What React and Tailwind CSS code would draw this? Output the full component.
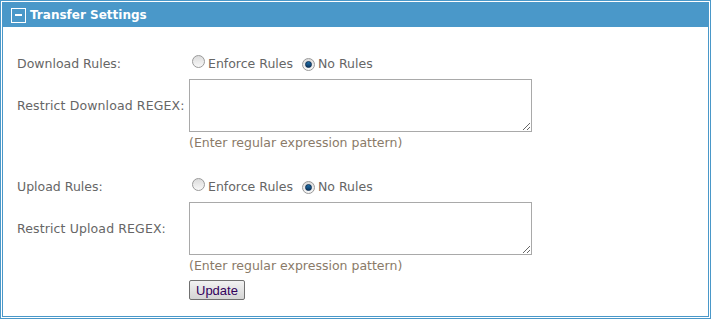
import React from 'react';

function Radio({ checked }) {
  return (
    <span className="inline-flex items-center justify-center w-[13px] h-[13px] rounded-full border border-[#9a9a9a] bg-gradient-to-b from-[#dcdcdc] to-[#f8f8f8] shrink-0">
      {checked && (
        <span className="w-[7px] h-[7px] rounded-full bg-gradient-to-b from-[#1f6fa8] to-[#0d3a66] border border-[#0a2d52]" />
      )}
    </span>
  );
}

function RuleRow({ label, enforce }) {
  return (
    <div className="flex items-center h-[22px]">
      <div className="w-[172px] shrink-0">{label}</div>
      <div className="flex items-center">
        <span className="ml-[3px]"><Radio checked={enforce} /></span>
        <span className="ml-[3px]">Enforce Rules</span>
        <span className="ml-[9px]"><Radio checked={!enforce} /></span>
        <span className="ml-[3px]">No Rules</span>
      </div>
    </div>
  );
}

function RegexRow({ label }) {
  return (
    <div>
      <div className="flex items-center">
        <div className="w-[172px] shrink-0 pt-[2px] tracking-[0.12px]">{label}</div>
        <textarea className="block w-[343px] h-[53px] border border-[#a9a9a9] bg-white outline-none" />
      </div>
      <div className="pl-[172px] mt-[2px] text-[#8a7a68] h-[18px] leading-[18px]">(Enter regular expression pattern)</div>
    </div>
  );
}

export default function App() {
  return (
    <div className="w-[711px] h-[319px] bg-white border border-[#4a98c9] p-px" style={{ fontFamily: '"DejaVu Sans", Verdana, sans-serif' }}>
      <div className="h-full border border-[#4a98c9] flex flex-col">
        <div className="h-[24px] bg-[#4a98c9] flex items-center pl-[8px]">
          <span className="w-[15px] h-[15px] border border-white flex items-center justify-center">
            <span className="w-[7px] h-[2px] bg-white" />
          </span>
          <span className="ml-[4px] text-white font-bold text-[12px]">Transfer Settings</span>
        </div>
        <div className="pl-[14px] pt-[26px] text-[12.5px] text-[#666]">
          <RuleRow label="Download Rules:" enforce={false} />
          <div className="mt-[4px]"><RegexRow label="Restrict Download REGEX:" /></div>
          <div className="mt-[24px]"><RuleRow label="Upload Rules:" enforce={false} /></div>
          <div className="mt-[4px]"><RegexRow label="Restrict Upload REGEX:" /></div>
          <div className="pl-[172px] mt-[5px]">
            <button className="h-[20px] px-[6px] border border-[#707070] rounded-[2px] bg-gradient-to-b from-[#f2f2f2] to-[#d4d4d4] text-[#33005c] text-[13px] leading-none" style={{ fontFamily: '"Liberation Sans", Arial, sans-serif' }}>Update</button>
          </div>
        </div>
      </div>
    </div>
  );
}
